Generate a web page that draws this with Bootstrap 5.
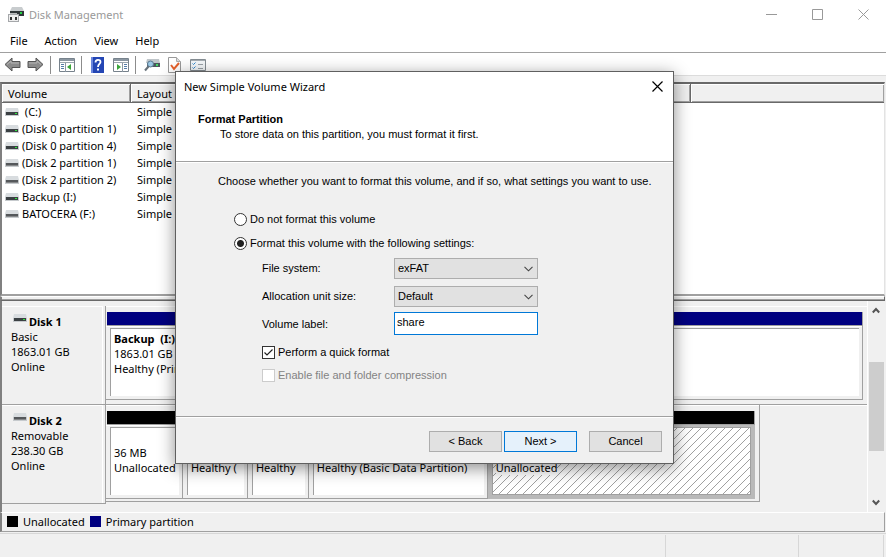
<!DOCTYPE html>
<html lang="en">
<head>
<meta charset="utf-8">
<meta name="viewport" content="width=device-width, initial-scale=1">
<title>Disk Management</title>
<link href="https://cdn.jsdelivr.net/npm/bootstrap@5.3.0/dist/css/bootstrap.min.css" rel="stylesheet">
<style>
  :root { --face: #f0f0f0; --line: #a0a0a0; --dark: #696969; --navy: #000080; }
  body { font-family: "Noto Sans", "Open Sans", sans-serif; font-size: 11px; line-height: 15px; color: #000; background: var(--face); min-height: 100vh; overflow: hidden; }
  svg { display: block; flex: none; }
  button { font: inherit; }

  /* main window frame */
  .app-title { height: 30px; padding: 0 10px 2px 8px; gap: 5px; color: #999; background: #fff; }
  .caption-btn { width: 46px; height: 30px; border: 0; padding: 0; background: none; display: flex; align-items: center; justify-content: center; }
  .app-title .caption-group { margin-right: -10px; }
  .app-menu { height: 22px; padding: 0 10px 2px; gap: 17px; background: #fff; }
  .app-menu a { color: #000; text-decoration: none; }
  .tool-strip { height: 24px; padding: 1px 1px 0; border-top: 1px solid var(--line); border-bottom: 1px solid #dcdcdc; background: #fff; }
  .tool-strip button { border: 0; padding: 0; background: none; width: 23px; display: flex; justify-content: center; }
  .tool-rule { width: 1px; height: 18px; margin: 0 4px 0 3px; background: #8c8c8c; }

  /* volume list */
  .volume-pane { margin: 6px 1px 0 0; border: 2px solid; border-color: var(--dark) #e3e3e3 var(--line) #808080; border-right-width: 1px; background: #fff; height: 214px; }
  .volume-table { width: 100%; table-layout: fixed; border-collapse: separate; border-spacing: 0; }
  .volume-table th { height: 19px; padding: 0 6px; font-weight: 400; background: var(--face); border-right: 1px solid var(--dark); border-bottom: 1px solid var(--dark); box-shadow: inset 1px 1px #fff, inset -1px -1px var(--line); }
  .volume-table th:last-child { border-right: 0; }
  .volume-table td { height: 17px; padding: 0 6px; line-height: 17px; white-space: nowrap; }
  .volume-table td:first-child { padding-left: 3px; }
  .col-volume { width: 129px; }
  .col-layout { width: 560px; }
  .vol-name { gap: 3px; }
  .split-bar { height: 5px; margin-right: 1px; background: var(--face); border-top: 1px solid #fff; border-bottom: 1px solid var(--dark); border-right: 1px solid var(--dark); border-left: 2px solid #808080; box-shadow: inset 0 -1px var(--line); }

  /* graphical disk view */
  .disk-view { border-left: 2px solid #808080; margin-right: 2px; }
  .disk-rows { padding-top: 5px; height: 211px; min-width: 0; }
  .disk-row { height: 99px; border-bottom: 1px solid var(--line); box-shadow: inset 0 1px #fff; }
  .disk-row.is-removable { border-bottom-color: transparent; }
  .disk-info { width: 104px; padding: 8px 0 0 9px; border-right: 1px solid var(--line); box-shadow: inset -2px 0 var(--face), inset -3px 0 #fff, inset 0 1px #fff; border-bottom: 1px solid var(--line); height: 99px; flex: none; }
  .disk-info strong { font-weight: 700; }
  .disk-head { gap: 2px; padding-left: 2px; }
  .disk-map { height: 97px; padding: 6px 4px 4px 0; min-width: 0; }
  .disk-map.map-full { flex: 1; }
  .disk-map.map-part { width: 86%; border-right: 1px solid var(--line); border-bottom: 1px solid var(--line); }
  .disk-bar { height: 14px; margin-left: 1px; border-bottom: 1px solid var(--line); border-right: 1px solid var(--line); }
  .bar-navy { background: var(--navy); }
  .bar-black { background: #000; }
  .cell-strip { height: 74px; }
  .disk-cell { padding: 2px 3px 3px 4px; border-right: 1px solid var(--line); border-bottom: 1px solid var(--line); box-shadow: inset 0 1px #fff; min-width: 0; }
  .cell-face { height: 100%; background: #fff; border-left: 1px solid var(--line); border-top: 1px solid var(--line); padding: 2px 0 0 3px; white-space: nowrap; overflow: hidden; }
  .disk-cell.is-picked { background: #b9b9b9; border-color: #b9b9b9; box-shadow: none; }
  .is-picked .cell-face { border: 1px solid var(--line); background: #fff url("data:image/svg+xml,%3Csvg xmlns='http://www.w3.org/2000/svg' width='8' height='8' shape-rendering='crispEdges'%3E%3Cpath fill='%23a0a0a0' d='M7 0h1v1H7zM6 1h1v1H6zM5 2h1v1H5zM4 3h1v1H4zM3 4h1v1H3zM2 5h1v1H2zM1 6h1v1H1zM0 7h1v1H0z'/%3E%3C/svg%3E"); }
  .is-picked span { background: #fff; }
  .scroll-rail { width: 17px; border-left: 1px solid #fff; padding: 6px 0; align-items: center; flex: none; }
  .scroll-grip { width: 15px; height: 89px; margin-top: 48px; background: #cdcdcd; }

  .legend-strip { height: 20px; margin-right: 1px; padding: 0 0 1px 5px; gap: 5px; border: 1px solid var(--line); border-left: 2px solid #808080; border-top-color: #fff; }
  .swatch { width: 11px; height: 11px; }
  .status-strip { height: 25px; margin-top: 1px; border-top: 1px solid #d7d7d7; padding: 1px 2px 1px 0; }
  .status-strip div { border-right: 1px solid #d7d7d7; }
  .status-mid { width: 133px; }
  .status-end { width: 85px; }

  /* wizard window */
  .wizard { position: absolute; left: 175px; top: 71px; width: 499px; border: 1px solid #5f5f5f; background: var(--face); box-shadow: 0 4px 16px rgba(0,0,0,.45); }
  .wizard-caption { height: 30px; padding: 0 0 2px 8px; background: #fff; }
  .wizard-caption .caption-btn { width: 31px; }
  .wizard-text { font-family: "Liberation Sans", Arial, sans-serif; font-size: 11px; }
  .wizard-head { padding: 10px 22px 19px; background: #fff; border-bottom: 1px solid var(--line); }
  .wizard-head h1 { font-size: 11px; line-height: 15px; font-weight: 700; margin: 0; }
  .wizard-head p { margin: 0 0 0 22px; }
  .wizard-body { padding: 11px 20px 0 42px; height: 254px; border-top: 1px solid #fff; }
  .wizard-body p { margin: 0 0 18px; }
  .choice { height: 24px; gap: 3px; padding-left: 16px; }
  .choice input { width: 13px; height: 13px; margin: 0; flex: none; border: 1px solid #333; background-color: #fff; }
  .choice input:checked[type=radio] { background: radial-gradient(circle, #222 0 3px, #fff 4px); border-color: #333; }
  .choice input[type=checkbox] { border-radius: 0; }
  .choice input:checked[type=checkbox] { background: #fff url("data:image/svg+xml,%3Csvg xmlns='http://www.w3.org/2000/svg' viewBox='0 0 11 11'%3E%3Cpath d='M1.5 5.5L4 8L9.5 2.5' fill='none' stroke='%23222' stroke-width='1.2'/%3E%3C/svg%3E"); border-color: #333; }
  .choice input:disabled { opacity: 1; border-color: #ccc; }
  .choice input:disabled ~ label { opacity: 1; color: #838383; }
  .field-grid { display: grid; grid-template-columns: 132px 144px; row-gap: 7px; padding: 3px 0 6px 44px; }
  .field-grid > label { line-height: 20px; }
  .field-grid .form-select, .field-grid .form-control { min-height: 0; height: 21px; padding: 0 3px; border: 1px solid #adadad; border-radius: 0; font-size: 11px; line-height: 19px; color: #000; }
  .field-grid .form-select { background: #e1e1e1 url("data:image/svg+xml,%3Csvg xmlns='http://www.w3.org/2000/svg' viewBox='0 0 9 6'%3E%3Cpath d='M.5 .8L4.500 4.800L8.500 .8' fill='none' stroke='%23444' stroke-width='1.100'/%3E%3C/svg%3E") no-repeat right 4px center / 9px 6px; }
  .field-grid .form-control { height: 23px; padding: 0 2px 3px; border-color: #0078d7; margin-top: -2px; }
  .tick-group .choice { height: 23px; gap: 3px; padding-left: 44px; }
  .wizard-foot { height: 47px; padding: 14px 11px 0; border-top: 1px solid var(--line); box-shadow: inset 0 1px #fff; gap: 2px; }
  .wizard-foot .btn { width: 73px; height: 21px; padding: 0; border: 1px solid #adadad; border-radius: 0; background: #e1e1e1; font-size: 11px; line-height: 19px; color: #000; }
  .wizard-foot .btn-next { border-color: #0078d7; background: #e5f1fb; }
  .wizard-foot .btn-cancel { margin-left: 10px; }
</style>
</head>
<body>
<svg width="0" height="0" class="position-absolute" aria-hidden="true">
  <symbol id="drive" viewBox="0 0 14 8"><path d="M1 0h12l1 4H0z" fill="#d8dcdf"/><path d="M0 4h14v4H0z" fill="#c6cacd"/><path d="M1 4h12v3H1z" fill="#3b4043"/><path d="M10 5h2v1h-2z" fill="#2ee83c"/></symbol>
  <symbol id="stick" viewBox="0 0 14 8"><path d="M1 0h12l1 4H0z" fill="#d8dcdf"/><path d="M0 4h14v4H0z" fill="#c6cacd"/><path d="M1 4h12v3H1z" fill="#55585b"/><path d="M1 6h12v1H1z" fill="#858789"/></symbol>
  <symbol id="arrow" viewBox="0 0 17 15"><path d="M1 7.500L8 1v3.500h8v6H8V14z" fill="#8b8b8b" stroke="#555"/><path d="M3 7.500L7 4v2h8" fill="none" stroke="#b5b5b5"/></symbol>
</svg>

<header>
  <div class="app-title d-flex align-items-center">
    <svg width="16" height="16" viewBox="0 0 16 16"><path d="M4 1h10l2 4H2z" fill="#c8ccce"/><path d="M2 5h14v5H2z" fill="#303638"/><path d="M12 6h2v2h-2z" fill="#27d447"/><path d="M2 7h7v3H2z" fill="#b8babb"/><path d="M0 8h11v8H0z" fill="#a5a7aa"/><path d="M1 9h9v6H1z" fill="#eee"/><path d="M2 11h2v3H2zM7 11h2v3H7z" fill="#333"/></svg>
    <span class="flex-grow-1">Disk Management</span>
    <div class="caption-group d-flex">
      <button class="caption-btn" aria-label="Minimize"><svg width="11" height="11"><path d="M0 5.500h11" stroke="#999"/></svg></button>
      <button class="caption-btn" aria-label="Maximize"><svg width="11" height="11"><path d="M.5 .5h10v10H.5z" fill="none" stroke="#999"/></svg></button>
      <button class="caption-btn" aria-label="Close"><svg width="11" height="11"><path d="M.5 .5l10 10M10.500 .5l-10 10" stroke="#999"/></svg></button>
    </div>
  </div>
  <nav class="app-menu d-flex align-items-center"><a href="#">File</a><a href="#">Action</a><a href="#">View</a><a href="#">Help</a></nav>
  <div class="tool-strip d-flex align-items-center">
    <button aria-label="Back"><svg width="17" height="15"><use href="#arrow"/></svg></button>
    <button aria-label="Forward"><svg width="17" height="15"><g transform="matrix(-1 0 0 1 17 0)"><use href="#arrow"/></g></svg></button>
    <span class="tool-rule"></span>
    <button aria-label="Show console tree"><svg width="16" height="14" viewBox="0 0 16 14"><path d="M.5 .5h15v13H.5z" fill="#fff" stroke="#77828c"/><path d="M1 1h14v2H1z" fill="#8b97a2"/><path d="M1 4.500h14" stroke="#9aa5ae"/><path d="M6.500 5v9" stroke="#8c98a3"/><path d="M2 6.500h3M2 8.500h3M2 10.500h3" stroke="#557da8"/><path d="M12 6v6L8 9z" fill="#3aa53a"/></svg></button>
    <span class="tool-rule"></span>
    <button aria-label="Help"><svg width="13" height="16" viewBox="0 0 13 16"><path d="M0 0h13v16H0z" fill="#2446b4"/><path d="M0 0h2v16H0z" fill="#6a86dd"/><path d="M4.500 5.500c0-3.500 5-3.500 5-.5 0 2-2.500 2-2.500 5" fill="none" stroke="#fff" stroke-width="1.800"/><path d="M6 11.500h2v2H6z" fill="#fff"/></svg></button>
    <button aria-label="Show action pane"><svg width="16" height="14" viewBox="0 0 16 14"><path d="M.5 .5h15v13H.5z" fill="#fff" stroke="#77828c"/><path d="M1 1h14v2H1z" fill="#8b97a2"/><path d="M1 4.500h14" stroke="#9aa5ae"/><path d="M9.500 5v9" stroke="#8c98a3"/><path d="M11 6.500h3M11 8.500h3M11 10.500h3" stroke="#557da8"/><path d="M4 6v6l4-3z" fill="#3aa53a"/></svg></button>
    <span class="tool-rule"></span>
    <button aria-label="Rescan disks"><svg width="16" height="14" viewBox="0 0 16 14"><path d="M3 1h12l1 4H2z" fill="#bfc5c9"/><path d="M3 5h13v4H3z" fill="#4b565c"/><path d="M12 6h2v2h-2z" fill="#43d965"/><circle cx="6.500" cy="6" r="3" fill="#9cc8e5" stroke="#5b7990"/><path d="M4.500 8.500L1 12.500" stroke="#68727a" stroke-width="2"/></svg></button>
    <button aria-label="Check"><svg width="13" height="16" viewBox="0 0 13 16"><path d="M.5 .5h8l4 4v11H.5z" fill="#fff" stroke="#999"/><path d="M8.500 .5v4h4" fill="#ddd" stroke="#aaa"/><path d="M3 8l3 4 5-6" fill="none" stroke="#e6602a" stroke-width="2"/></svg></button>
    <button aria-label="Settings"><svg width="16" height="12" viewBox="0 0 16 12"><path d="M.5 .5h15v11H.5z" fill="#f4f7f9" stroke="#858d93"/><path d="M1 1h14v1H1z" fill="#a6adb2"/><path d="M2.500 4.500l1 1 2-2M2.500 8.500l1 1 2-2" fill="none" stroke="#2d87cf"/><path d="M8 5.500h5M8 9.500h5" stroke="#9ba2a8"/></svg></button>
  </div>
</header>

<main>
  <section class="volume-pane overflow-hidden">
    <table class="volume-table">
      <colgroup><col class="col-volume"><col class="col-layout"><col></colgroup>
      <thead><tr><th scope="col">Volume</th><th scope="col">Layout</th><th></th></tr></thead>
      <tbody>
        <tr><td><div class="vol-name d-flex align-items-center"><svg width="14" height="8"><use href="#drive"/></svg><span>&nbsp;(C:)</span></div></td><td>Simple</td><td></td></tr>
        <tr><td><div class="vol-name d-flex align-items-center"><svg width="14" height="8"><use href="#drive"/></svg><span>(Disk 0 partition 1)</span></div></td><td>Simple</td><td></td></tr>
        <tr><td><div class="vol-name d-flex align-items-center"><svg width="14" height="8"><use href="#drive"/></svg><span>(Disk 0 partition 4)</span></div></td><td>Simple</td><td></td></tr>
        <tr><td><div class="vol-name d-flex align-items-center"><svg width="14" height="8"><use href="#stick"/></svg><span>(Disk 2 partition 1)</span></div></td><td>Simple</td><td></td></tr>
        <tr><td><div class="vol-name d-flex align-items-center"><svg width="14" height="8"><use href="#stick"/></svg><span>(Disk 2 partition 2)</span></div></td><td>Simple</td><td></td></tr>
        <tr><td><div class="vol-name d-flex align-items-center"><svg width="14" height="8"><use href="#drive"/></svg><span>Backup (I:)</span></div></td><td>Simple</td><td></td></tr>
        <tr><td><div class="vol-name d-flex align-items-center"><svg width="14" height="8"><use href="#stick"/></svg><span>BATOCERA (F:)</span></div></td><td>Simple</td><td></td></tr>
      </tbody>
    </table>
  </section>
  <div class="split-bar"></div>

  <section class="disk-view d-flex">
    <div class="disk-rows flex-grow-1">
      <div class="disk-row d-flex">
        <div class="disk-info">
          <div class="disk-head d-flex"><svg width="14" height="8"><use href="#drive"/></svg><strong>Disk 1</strong></div>
          <div>Basic</div><div>1863.01 GB</div><div>Online</div>
        </div>
        <div class="disk-map map-full">
          <div class="disk-bar bar-navy"></div>
          <div class="cell-strip d-flex">
            <div class="disk-cell flex-fill"><div class="cell-face"><strong>Backup &nbsp;(I:)</strong><br>1863.01 GB NTFS<br>Healthy (Primary Partition)</div></div>
          </div>
        </div>
      </div>
      <div class="disk-row is-removable d-flex">
        <div class="disk-info">
          <div class="disk-head d-flex"><svg width="14" height="8"><use href="#stick"/></svg><strong>Disk 2</strong></div>
          <div>Removable</div><div>238.30 GB</div><div>Online</div>
        </div>
        <div class="flex-fill">
          <div class="disk-map map-part">
            <div class="disk-bar bar-black"></div>
            <div class="cell-strip d-flex">
              <div class="disk-cell" style="flex: 69 0 0"><div class="cell-face"><br>36 MB<br>Unallocated</div></div>
              <div class="disk-cell" style="flex: 57 0 0"><div class="cell-face"><br><br>Healthy (</div></div>
              <div class="disk-cell" style="flex: 53 0 0"><div class="cell-face"><br><br>Healthy</div></div>
              <div class="disk-cell" style="flex: 171 0 0"><div class="cell-face"><br><br>Healthy (Basic Data Partition)</div></div>
              <div class="disk-cell is-picked" style="flex: 260 0 0"><div class="cell-face"><br><br><span>Unallocated</span></div></div>
            </div>
          </div>
        </div>
      </div>
    </div>
    <div class="scroll-rail d-flex flex-column" aria-hidden="true">
      <svg width="8" height="7"><path d="M.8 5.500L4 2l3.200 3.500" fill="none" stroke="#555" stroke-width="2"/></svg>
      <div class="scroll-grip"></div>
      <svg class="mt-auto" width="8" height="7"><path d="M.8 1.500L4 5l3.200-3.500" fill="none" stroke="#555" stroke-width="2"/></svg>
    </div>
  </section>
  <div class="legend-strip d-flex align-items-center">
    <span class="swatch bar-black"></span><span>Unallocated</span>
    <span class="swatch bar-navy"></span><span>Primary partition</span>
  </div>
</main>
<footer class="status-strip d-flex"><div class="flex-grow-1"></div><div class="status-mid"></div><div class="status-end"></div></footer>

<form class="wizard" role="dialog" aria-labelledby="wizardTitle">
  <div class="wizard-caption d-flex align-items-center justify-content-between">
    <span id="wizardTitle">New Simple Volume Wizard</span>
    <button type="button" class="caption-btn" aria-label="Close wizard"><svg width="11" height="11"><path d="M.5 .5l10 10M10.500 .5l-10 10" stroke="#000" stroke-width="1.200"/></svg></button>
  </div>
  <div class="wizard-text">
    <div class="wizard-head">
      <h1>Format Partition</h1>
      <p>To store data on this partition, you must format it first.</p>
    </div>
    <div class="wizard-body">
      <p>Choose whether you want to format this volume, and if so, what settings you want to use.</p>
      <div class="choice d-flex align-items-center"><input class="form-check-input" type="radio" name="mode" id="modeNone"><label for="modeNone">Do not format this volume</label></div>
      <div class="choice d-flex align-items-center"><input class="form-check-input" type="radio" name="mode" id="modeFormat" checked><label for="modeFormat">Format this volume with the following settings:</label></div>
      <div class="field-grid">
        <label for="fileSystem">File system:</label>
        <select class="form-select" id="fileSystem"><option>exFAT</option></select>
        <label for="unitSize">Allocation unit size:</label>
        <select class="form-select" id="unitSize"><option>Default</option></select>
        <label for="volumeLabel">Volume label:</label>
        <input class="form-control" id="volumeLabel" type="text" value="share">
      </div>
      <div class="tick-group">
        <div class="choice d-flex align-items-center"><input class="form-check-input" type="checkbox" id="quick" checked><label for="quick">Perform a quick format</label></div>
        <div class="choice d-flex align-items-center"><input class="form-check-input" type="checkbox" id="compress" disabled><label for="compress">Enable file and folder compression</label></div>
      </div>
    </div>
    <div class="wizard-foot d-flex justify-content-end">
      <button type="button" class="btn">&lt; Back</button>
      <button type="button" class="btn btn-next">Next &gt;</button>
      <button type="button" class="btn btn-cancel">Cancel</button>
    </div>
  </div>
</form>
<script src="https://cdn.jsdelivr.net/npm/bootstrap@5.3.0/dist/js/bootstrap.bundle.min.js"></script>
</body>
</html>
